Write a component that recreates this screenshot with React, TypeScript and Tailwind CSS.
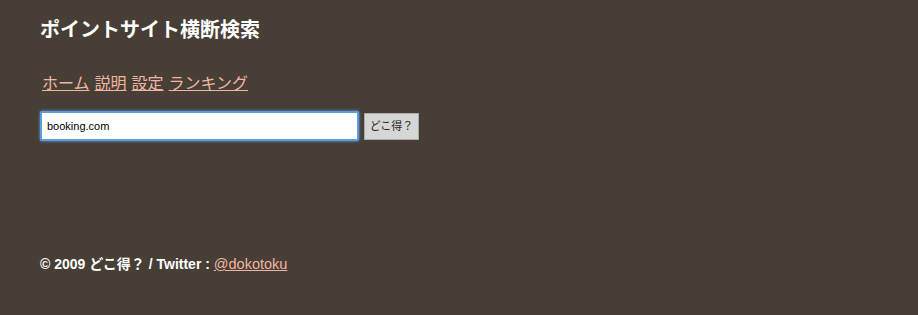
import React from "react";

const font = { fontFamily: '"Liberation Sans", "Noto Sans CJK JP", sans-serif' };

export default function App() {
  return (
    <div className="min-h-[315px] w-full bg-[#473e36] px-10 pt-[17px] text-white" style={font}>
      <h1 className="text-[20px] font-bold leading-[26px]">ポイントサイト横断検索</h1>

      <nav className="mt-[31px] flex gap-[5px] pl-[2px] text-[16px] leading-[20px]">
        <a href="#" className="text-[#f0b5a2] underline">ホーム</a>
        <a href="#" className="text-[#f0b5a2] underline">説明</a>
        <a href="#" className="text-[#f0b5a2] underline">設定</a>
        <a href="#" className="text-[#f0b5a2] underline">ランキング</a>
      </nav>

      <form className="mt-[17px] flex items-center gap-[5px]" onSubmit={(e) => e.preventDefault()}>
        <input
          defaultValue="booking.com"
          className="h-[30px] w-[319px] rounded-[2px] border-2 border-[#5b9be0] bg-white px-[5px] text-[11px] text-black outline-none shadow-[0_0_3px_#6aa7ec]"
        />
        <button
          type="submit"
          className="h-[27px] w-[55px] border border-[#aaa] bg-[#d6d6d6] text-[11px] text-[#222]"
        >
          どこ得？
        </button>
      </form>

      <footer className="mt-[114px] text-[14px] font-bold leading-[18px]">
        © 2009 どこ得？ / Twitter :{" "}
        <a href="#" className="font-normal text-[14.5px] text-[#f0b5a2] underline">@dokotoku</a>
      </footer>
    </div>
  );
}
